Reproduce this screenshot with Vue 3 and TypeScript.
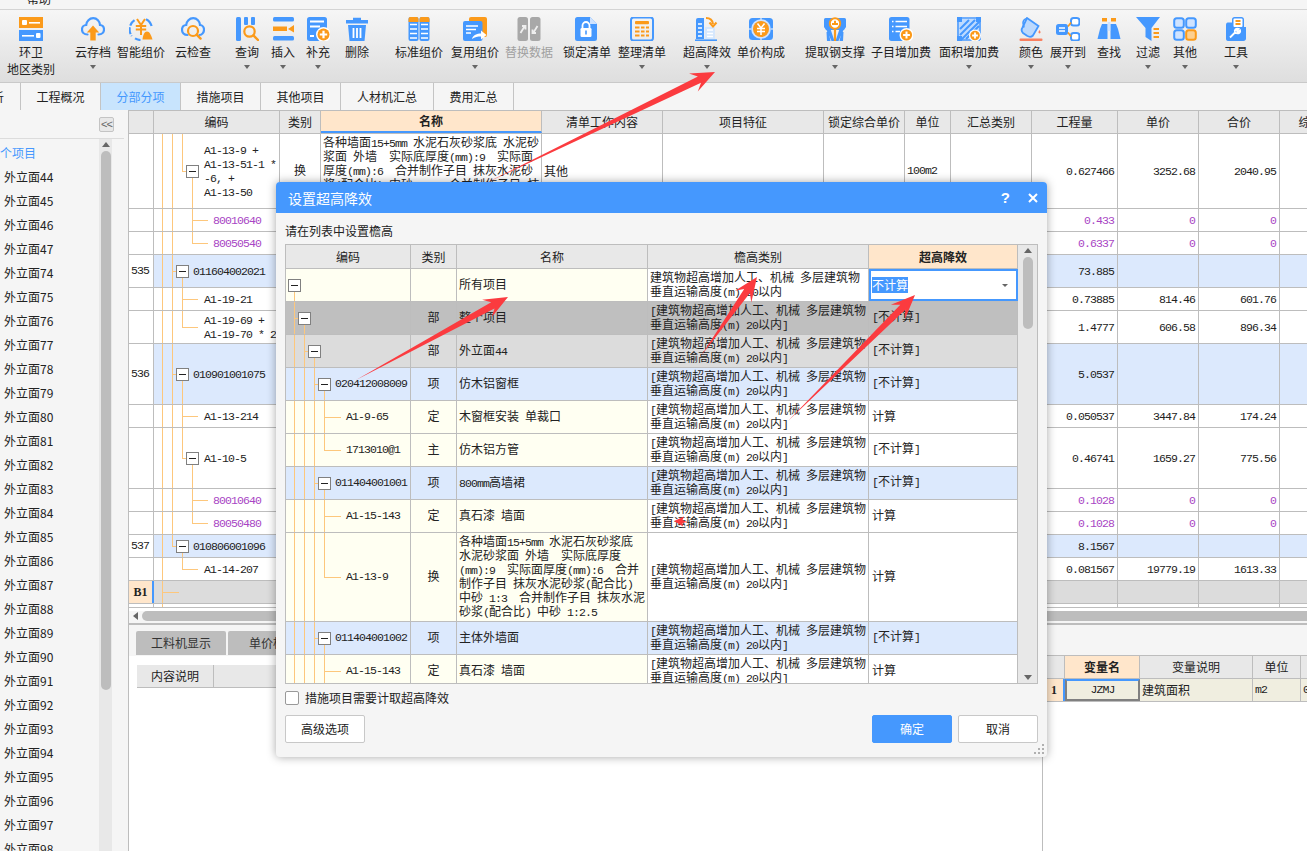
<script setup lang="ts">
type Seg = { full?: number[]; up?: number[]; down?: number[]; h?: [number, number]; box?: number }

const BLUE = '#4598fe'
const OR = '#fb9a1a'

const icons: Record<string, string> = {
  huanwei: `<rect x="0" y="0" width="24" height="11" fill="${OR}"/><rect x="0" y="13" width="24" height="11" fill="${BLUE}"/><rect x="3" y="3" width="5" height="5" rx="1" fill="#fff"/><rect x="10" y="5" width="11" height="1.6" fill="#fff"/><rect x="3" y="18" width="12" height="1.6" fill="#fff"/><rect x="17" y="16" width="4.5" height="5" rx="1" fill="#fff"/>`,
  cloudUp: `<path d="M6.5 17.5C3 17.5 1 15.2 1 12.5 1 9.8 3 8 5.2 8 5.5 4.2 8.4 1.2 12.2 1.2 16 1.2 18.8 4.2 19 8 21.2 8.2 23 10 23 12.5 23 15.2 21 17.5 17.5 17.5" fill="none" stroke="${BLUE}" stroke-width="2.2" stroke-linecap="round"/><path d="M12 8.5 18.2 15.5H14.7V23.5H9.3V15.5H5.8Z" fill="${OR}"/>`,
  smart: `<path d="M5.5 3.2A11 11 0 0 0 2.8 19" fill="none" stroke="${BLUE}" stroke-width="2.2" stroke-dasharray="7 1.6"/><path d="M17 2.2A11 11 0 0 1 22.6 9" fill="none" stroke="${BLUE}" stroke-width="2.2"/><path d="M6 21.4A11 11 0 0 0 11.5 23" fill="none" stroke="${BLUE}" stroke-width="2.2"/><path d="M8 2 12 8 16 2M6.8 9H17.2M6.8 12.6H17.2M12 8V18" fill="none" stroke="${OR}" stroke-width="2"/><path d="M13.5 22.5C14 18 15.5 14.5 18 14.5 20.5 14.5 22 18 23.5 22.5Z" fill="${OR}"/>`,
  cloudFind: `<path d="M6.5 18C3 18 1 15.5 1 12.8 1 10 3 8.2 5.2 8 5.5 4.2 8.4 1.2 12.2 1.2 16 1.2 18.8 4.2 19 8 21.2 8.2 23 10.2 23 12.8 23 15.5 21 18 18.5 18" fill="none" stroke="${BLUE}" stroke-width="2.2" stroke-linecap="round"/><circle cx="12" cy="14" r="5" fill="none" stroke="${OR}" stroke-width="2.2"/><path d="M15.6 17.6 19.6 21.6" stroke="${OR}" stroke-width="2.4" stroke-linecap="round"/>`,
  query: `<rect x="1" y="0" width="5" height="24" rx="1.5" fill="${BLUE}"/><rect x="9" y="0" width="4" height="8" rx="1" fill="${BLUE}"/><rect x="16" y="0" width="4" height="8" rx="1" fill="${BLUE}"/><circle cx="14.5" cy="14.5" r="5.2" fill="none" stroke="${OR}" stroke-width="2.2"/><path d="M18.4 18.4 23 23" stroke="${OR}" stroke-width="2.4" stroke-linecap="round"/>`,
  insert: `<rect x="2" y="0" width="21" height="4.5" rx="1.5" fill="${BLUE}"/><rect x="2" y="9.5" width="14" height="4.5" fill="${OR}"/><path d="M23 8 17 12 23 15.5Z" fill="${OR}"/><rect x="2" y="19" width="21" height="4.5" rx="1.5" fill="${BLUE}"/>`,
  plusDoc: `<rect x="1" y="0" width="20" height="24" rx="2.5" fill="${BLUE}"/><path d="M4 4.5H18M4 9.5H14M4 19H8" stroke="#fff" stroke-width="1.8"/><circle cx="17.5" cy="17.5" r="7.5" fill="#fff"/><circle cx="17.5" cy="17.5" r="6" fill="${OR}"/><path d="M17.5 13.8V21.2M13.8 17.5H21.2" stroke="#fff" stroke-width="2.2"/>`,
  trash: `<path d="M8 3V0.8H16V3H23V6.5H1V3Z" fill="${BLUE}"/><path d="M3 8H21L19.5 24H4.5Z" fill="${BLUE}"/><path d="M8.5 11V21M12 11V21M15.5 11V21" stroke="#fff" stroke-width="1.8"/>`,
  standard: `<rect x="1.5" y="0" width="10" height="24" rx="2" fill="${BLUE}"/><rect x="12.5" y="0" width="10" height="24" rx="2" fill="${BLUE}"/><path d="M1.5 2A2 2 0 0 1 3.5 0H9.5A2 2 0 0 1 11.5 2V5H1.5ZM12.5 2A2 2 0 0 1 14.5 0H20.5A2 2 0 0 1 22.5 2V5H12.5Z" fill="${OR}"/><path d="M3 7.5H10M3 12H10M3 16.5H10M3 21H10M14 7.5H21M14 12H21M14 16.5H21M14 21H21" stroke="#fff" stroke-width="1.7"/>`,
  reuse: `<rect x="6" y="0" width="18" height="20" rx="2" fill="${OR}"/><rect x="0" y="4" width="19.5" height="20" rx="2" fill="${BLUE}"/><path d="M3 9H15M3 12.5H13M3 16H8" stroke="#fff" stroke-width="1.6"/><path d="M9 22C10 18 14 16.5 18 16.5V13.5L23.5 18 18 22.5V19.5C14.5 19.5 12 20 9 22Z" fill="#fff"/>`,
  replace: `<rect x="0.5" y="0" width="10.5" height="24" rx="2.5" fill="#a8a8a8"/><rect x="13" y="0" width="10.5" height="24" rx="2.5" fill="#a8a8a8"/><path d="M3.5 16 7.5 9.5M5 9H8.5V12.5" fill="none" stroke="#eee" stroke-width="1.8"/><path d="M20.5 9 16.5 15.5M19 16H15.5V12.5" fill="none" stroke="#eee" stroke-width="1.8"/>`,
  lock: `<path d="M0 2.5A2.5 2.5 0 0 1 2.5 0H15L22 7V21.5A2.5 2.5 0 0 1 19.5 24H2.5A2.5 2.5 0 0 1 0 21.5Z" fill="${BLUE}"/><path d="M15 0 22 7H15Z" fill="#cfe3ff"/><rect x="5.5" y="11" width="11" height="9" rx="1.2" fill="#fff"/><path d="M7.5 11V8.5A3.5 3.5 0 0 1 14.5 8.5V11" fill="none" stroke="#fff" stroke-width="1.8"/><rect x="10.2" y="13.5" width="1.6" height="4" fill="${BLUE}"/>`,
  organize: `<rect x="1" y="0.5" width="22" height="23" rx="2.5" fill="none" stroke="${BLUE}" stroke-width="2"/><rect x="5" y="4" width="14" height="3.2" rx="1" fill="${OR}"/><path d="M5 10.5H9.5M11 10.5H14.5M16 10.5H19M5 14.5H9.5M11 14.5H14.5M16 14.5H19M5 18.5H9.5M11 18.5H14.5M16 18.5H19" stroke="${OR}" stroke-width="2"/>`,
  high: `<path d="M1 22V3A2 2 0 0 1 3 1H9V22Z" fill="${BLUE}"/><path d="M3 7H7M3 11H7M3 15H7M3 19H7" stroke="#fff" stroke-width="1.6"/><rect x="10" y="10" width="10" height="12" fill="#d5e7fd"/><path d="M12 13H18M12 16.5H18M12 19.5H18" stroke="#fff" stroke-width="1.4"/><rect x="0" y="22.4" width="22" height="1.6" fill="${BLUE}"/><path d="M11 1C15 1 17.5 3 18 7M14.5 5.5 18 9.5 21.5 5.5" fill="none" stroke="${OR}" stroke-width="2"/>`,
  yuan: `<rect x="0" y="1" width="24" height="22" rx="3.5" fill="${BLUE}"/><path d="M12 1V3M12 21V23M0 12H2M22 12H24" stroke="#fff" stroke-width="1"/><circle cx="12" cy="12" r="9.8" fill="#cfe3ff"/><circle cx="12" cy="12" r="8" fill="${OR}"/><path d="M8.5 6.5 12 11 15.5 6.5M8 11.5H16M8 14.5H16M12 11V18" fill="none" stroke="#fff" stroke-width="1.5"/>`,
  steel: `<path d="M1 2.5A1.5 1.5 0 0 1 2.5 1H21.5A1.5 1.5 0 0 1 23 2.5V10L21 13H3L1 10Z" fill="${BLUE}"/><path d="M3 12H7.5L11.5 24H8.5ZM21 12H16.5L12.5 24H15.5Z" fill="${BLUE}"/><path d="M4 24H7.5L5.5 15H3.5ZM20 24H16.5L18.5 15H20.5Z" fill="${BLUE}"/><path d="M12 11V24" stroke="${OR}" stroke-width="2.2"/><circle cx="12" cy="6.5" r="5.2" fill="#fff" stroke="${OR}" stroke-width="2"/><path d="M9 8H15V6H13V3.8H11V6H9Z" fill="${OR}"/>`,
  subAdd: `<rect x="0" y="0" width="20.5" height="24" rx="2.5" fill="${BLUE}"/><path d="M3 4.5H4.5M6.5 4.5H18M3 9.5H4.5M6.5 9.5H18M3 14.5H4.5M6.5 14.5H11" stroke="#fff" stroke-width="1.7"/><circle cx="17.5" cy="18" r="7" fill="#fff"/><circle cx="17.5" cy="18" r="5.6" fill="${OR}"/><path d="M17.5 14.6V21.4M14.1 18H20.9" stroke="#fff" stroke-width="2"/>`,
  area: `<rect x="2" y="2" width="20" height="20" fill="#fff"/><path d="M2 2H22V22H2Z" fill="${BLUE}" opacity=".35"/><path d="M3 12 12 3M3 18 18 3M3 24 24 3M9 22 22 9M15 22 22 15" stroke="${BLUE}" stroke-width="2"/><path d="M1 1H23M1 23H23M1 1V23M23 1V23" stroke="${BLUE}" stroke-width="1.6"/><rect x="0" y="0" width="5" height="5" fill="${BLUE}"/><rect x="19" y="0" width="5" height="5" fill="${BLUE}"/><rect x="0" y="19" width="5" height="5" fill="${BLUE}"/><circle cx="18" cy="18.5" r="6" fill="#fff"/><circle cx="18" cy="18.5" r="4.8" fill="${OR}"/><path d="M18 15.6V21.4M15.1 18.5H20.9" stroke="#fff" stroke-width="1.8"/>`,
  color: `<path d="M8 1 19.5 9 14 18.5C12.5 20 10 20 8 18.8L4 16C2.5 14.5 2.5 12 3.5 10.5Z" fill="#bcd9fd" stroke="${BLUE}" stroke-width="1.8"/><path d="M5 10.5 4 6C4 3.5 6 1.5 8 1.5" fill="none" stroke="${BLUE}" stroke-width="1.6"/><path d="M20.5 13C21.8 15 22 16 20.5 16.5 19 16 19.2 15 20.5 13Z" fill="#f98060"/><rect x="0.5" y="21.5" width="23" height="2.5" rx="1" fill="#f98060"/>`,
  expand: `<rect x="0" y="7" width="12" height="11" rx="2.5" fill="${BLUE}"/><path d="M3 11H9M3 14H9" stroke="#fff" stroke-width="1.4"/><rect x="15" y="1" width="8.4" height="7.5" rx="2.5" fill="#fff" stroke="${BLUE}" stroke-width="2"/><rect x="15" y="16" width="8.4" height="7.5" rx="2.5" fill="#fff" stroke="${BLUE}" stroke-width="2"/><path d="M12 9.5 15 5.5M12 15.5 15 19.5" stroke="${OR}" stroke-width="1.6"/>`,
  binoc: `<path d="M5 7H10.5V22H0.5L3 12Z" fill="${BLUE}"/><path d="M13.5 7H19L21 12 23.5 22H13.5Z" fill="${BLUE}"/><path d="M5 1H10V4.5H5ZM14 1H19V4.5H14Z" fill="${OR}"/><path d="M10.8 5H13.2V14H10.8Z" fill="#cfe3ff"/>`,
  filter: `<path d="M0 0H24L15.5 11V24L9.5 20V11Z" fill="${BLUE}"/><path d="M17.5 12H23M17.5 16H23M17.5 20H23" stroke="${OR}" stroke-width="2"/>`,
  others: `<rect x="1.2" y="1.2" width="9.6" height="9.6" rx="2.5" fill="#cfe3ff" stroke="${BLUE}" stroke-width="2"/><rect x="13.2" y="1.2" width="9.6" height="9.6" rx="2.5" fill="#cfe3ff" stroke="${BLUE}" stroke-width="2"/><rect x="1.2" y="13.2" width="9.6" height="9.6" rx="2.5" fill="#cfe3ff" stroke="${BLUE}" stroke-width="2"/><rect x="13.2" y="13.2" width="9.6" height="9.6" rx="2.5" fill="#fdd091" stroke="${OR}" stroke-width="2"/>`,
  tool: `<path d="M2 8C2 6 3 5.5 4.5 5.5H8V2.5C8 1 9 0 10.5 0H17.5C19 0 20 1 20 2.5V10H22V21.5C22 23 21 24 19.5 24H4C2.5 24 2 23 2 21.5Z" fill="${BLUE}"/><rect x="9.5" y="1.5" width="9" height="8.5" rx="1" fill="#fff"/><path d="M11.5 4H16.5M11.5 7H16.5" stroke="${OR}" stroke-width="1.8"/><path d="M6 20.5 11 15.5M11 15.5C10 13 12 11 14.5 11.8L12.8 13.8 14 15 16 13.3C16.8 15.8 14 17.5 11 15.5" fill="none" stroke="#fff" stroke-width="1.8"/>`,
}

type RibbonItem = { icon: string; label: string; c: number; drop?: boolean; sub?: string; off?: boolean }
const ribbonRaw: RibbonItem[] = [
  { icon: 'huanwei', label: '环卫', c: 31, sub: '地区类别' },
  { icon: 'cloudUp', label: '云存档', c: 93, drop: true },
  { icon: 'smart', label: '智能组价', c: 141 },
  { icon: 'cloudFind', label: '云检查', c: 193 },
  { icon: 'query', label: '查询', c: 247, drop: true },
  { icon: 'insert', label: '插入', c: 283, drop: true },
  { icon: 'plusDoc', label: '补充', c: 318, drop: true },
  { icon: 'trash', label: '删除', c: 357 },
  { icon: 'standard', label: '标准组价', c: 419 },
  { icon: 'reuse', label: '复用组价', c: 475, drop: true },
  { icon: 'replace', label: '替换数据', c: 529, off: true },
  { icon: 'lock', label: '锁定清单', c: 587 },
  { icon: 'organize', label: '整理清单', c: 642, drop: true },
  { icon: 'high', label: '超高降效', c: 707, drop: true },
  { icon: 'yuan', label: '单价构成', c: 761 },
  { icon: 'steel', label: '提取钢支撑', c: 835, drop: true },
  { icon: 'subAdd', label: '子目增加费', c: 901 },
  { icon: 'area', label: '面积增加费', c: 969, drop: true },
  { icon: 'color', label: '颜色', c: 1031, drop: true },
  { icon: 'expand', label: '展开到', c: 1068, drop: true },
  { icon: 'binoc', label: '查找', c: 1109 },
  { icon: 'filter', label: '过滤', c: 1148, drop: true },
  { icon: 'others', label: '其他', c: 1185, drop: true },
  { icon: 'tool', label: '工具', c: 1236, drop: true },
]
let rightEdge = 0
const ribbon = ribbonRaw.map((r) => {
  const w = Math.max(r.label.length, r.sub ? r.sub.length : 0) * 12
  const left = r.c - w / 2
  const gap = left - rightEdge
  rightEdge = left + w
  return { ...r, w, gap }
})

const tabs = [
  { t: '分析', w: 21, first: true },
  { t: '工程概况', w: 80 },
  { t: '分部分项', w: 80, on: true },
  { t: '措施项目', w: 80 },
  { t: '其他项目', w: 80 },
  { t: '人材机汇总', w: 93 },
  { t: '费用汇总', w: 80 },
]

const side = ['44', '45', '46', '47', ...Array.from({ length: 25 }, (_, i) => String(74 + i))]

const mainHead = [
  { t: '', w: 25 }, { t: '编码', w: 126 }, { t: '类别', w: 41 }, { t: '名称', w: 221, on: true },
  { t: '清单工作内容', w: 121 }, { t: '项目特征', w: 161 }, { t: '锁定综合单价', w: 81 }, { t: '单位', w: 46 },
  { t: '汇总类别', w: 81 }, { t: '工程量', w: 86 }, { t: '单价', w: 81 }, { t: '合价', w: 81 }, { t: '综合单价', w: 86 },
]

type MainRow = {
  h: number; no?: string; code?: string; x?: number; cls?: string; purple?: boolean
  kind?: string; name?: string; work?: string; unit?: string
  qty?: string; price?: string; total?: string; tree: Seg; b1?: boolean
}
const mainRows: MainRow[] = [
  { h: 75, code: 'A1-13-9 +\nA1-13-51-1 *\n-6, +\nA1-13-50', x: 50, kind: '换', name: '各种墙面15+5mm 水泥石灰砂浆底 水泥砂\n浆面 外墙  实际底厚度(mm):9  实际面\n厚度(mm):6  合并制作子目 抹灰水泥砂\n浆(配合比) 中砂 1:3  合并制作子目 抹', work: '其他', unit: '100m2', qty: '0.627466', price: '3252.68', total: '2040.95', tree: { full: [8, 18], up: [28], h: [28, 32], box: 38, down: [38] } },
  { h: 23, code: '80010640', x: 59, purple: true, qty: '0.433', price: '0', total: '0', tree: { full: [8, 18, 38], h: [38, 54] } },
  { h: 23, code: '80050540', x: 59, purple: true, qty: '0.6337', price: '0', total: '0', tree: { full: [8, 18], up: [38], h: [38, 54] } },
  { h: 33, no: '535', code: '011604002021', x: 39, cls: 'blue', qty: '73.885', tree: { full: [8, 18], h: [18, 22], box: 28, down: [28] } },
  { h: 23, code: 'A1-19-21', x: 50, qty: '0.73885', price: '814.46', total: '601.76', tree: { full: [8, 18, 28], h: [28, 44] } },
  { h: 33, code: 'A1-19-69 +\nA1-19-70 * 2', x: 50, qty: '1.4777', price: '606.58', total: '896.34', tree: { full: [8, 18], up: [28], h: [28, 44] } },
  { h: 61, no: '536', code: '010901001075', x: 39, cls: 'blue', qty: '5.0537', tree: { full: [8, 18], h: [18, 22], box: 28, down: [28] } },
  { h: 23, code: 'A1-13-214', x: 50, qty: '0.050537', price: '3447.84', total: '174.24', tree: { full: [8, 18, 28], h: [28, 44] } },
  { h: 61, code: 'A1-10-5', x: 50, qty: '0.46741', price: '1659.27', total: '775.56', tree: { full: [8, 18], up: [28], h: [28, 32], box: 38, down: [38] } },
  { h: 23, code: '80010640', x: 59, purple: true, qty: '0.1028', price: '0', total: '0', tree: { full: [8, 18, 38], h: [38, 54] } },
  { h: 23, code: '80050480', x: 59, purple: true, qty: '0.1028', price: '0', total: '0', tree: { full: [8, 18], up: [38], h: [38, 54] } },
  { h: 23, no: '537', code: '010806001096', x: 39, cls: 'blue', qty: '8.1567', tree: { full: [8], up: [18], h: [18, 22], box: 28, down: [28] } },
  { h: 23, code: 'A1-14-207', x: 50, qty: '0.081567', price: '19779.19', total: '1613.33', tree: { full: [8], up: [28], h: [28, 44] } },
  { h: 23, no: 'B1', b1: true, cls: 'gray', tree: { full: [8], h: [8, 25] } },
  { h: 4, tree: { full: [8] } },
]

const dialogHead = [
  { t: '编码', w: 125 }, { t: '类别', w: 46 }, { t: '名称', w: 191 }, { t: '檐高类别', w: 221 }, { t: '超高降效', w: 149, on: true },
]
const L0 = '建筑物超高增加人工、机械 多层建筑物\n垂直运输高度(m) 20以内'
const L1 = '[建筑物超高增加人工、机械 多层建筑物\n垂直运输高度(m) 20以内]'
const longName = '各种墙面15+5mm 水泥石灰砂浆底\n水泥砂浆面 外墙  实际底厚度\n(mm):9  实际面厚度(mm):6  合并\n制作子目 抹灰水泥砂浆(配合比)\n中砂 1:3  合并制作子目 抹灰水泥\n砂浆(配合比) 中砂 1:2.5'
type DlgRow = { h: number; code?: string; x?: number; kind: string; name: string; type: string; val: string; cls: string; tree: Seg; edit?: boolean }
const dlgRows: DlgRow[] = [
  { h: 33, kind: '', name: '所有项目', type: L0, val: '不计算', cls: 'y', edit: true, tree: { box: 8, down: [8] } },
  { h: 33, kind: '部', name: '整个项目', type: L1, val: '[不计算]', cls: 'g1', tree: { full: [8], h: [8, 12], box: 18, down: [18] } },
  { h: 33, kind: '部', name: '外立面44', type: L1, val: '[不计算]', cls: 'g2', tree: { full: [8, 18], h: [18, 22], box: 28, down: [28] } },
  { h: 33, code: '020412008009', x: 49, kind: '项', name: '仿木铝窗框', type: L1, val: '[不计算]', cls: 'blue', tree: { full: [8, 18, 28], h: [28, 32], box: 38, down: [38] } },
  { h: 33, code: 'A1-9-65', x: 60, kind: '定', name: '木窗框安装 单裁口', type: L1, val: '计算', cls: 'y', tree: { full: [8, 18, 28, 38], h: [38, 55] } },
  { h: 33, code: '1713010@1', x: 60, kind: '主', name: '仿木铝方管', type: L1, val: '[不计算]', cls: 'y', tree: { full: [8, 18, 28], up: [38], h: [38, 55] } },
  { h: 33, code: '011404001001', x: 49, kind: '项', name: '800mm高墙裙', type: L1, val: '[不计算]', cls: 'blue', tree: { full: [8, 18, 28], h: [28, 32], box: 38, down: [38] } },
  { h: 33, code: 'A1-15-143', x: 60, kind: '定', name: '真石漆 墙面', type: L1, val: '计算', cls: 'y', tree: { full: [8, 18, 28, 38], h: [38, 55] } },
  { h: 89, code: 'A1-13-9', x: 60, kind: '换', name: longName, type: L1, val: '计算', cls: 'y', tree: { full: [8, 18, 28], up: [38], h: [38, 55] } },
  { h: 33, code: '011404001002', x: 49, kind: '项', name: '主体外墙面', type: L1, val: '[不计算]', cls: 'blue', tree: { full: [8, 18, 28], h: [28, 32], box: 38, down: [38] } },
  { h: 33, code: 'A1-15-143', x: 60, kind: '定', name: '真石漆 墙面', type: L1, val: '计算', cls: 'y', tree: { full: [8, 18, 28, 38], h: [38, 55] } },
]

function runs(text: string) {
  return (text.match(/[\x00-\x7f]+|[^\x00-\x7f]+/g) || []).map((t) => ({ t, m: /^[\x00-\x7f]/.test(t) }))
}

// tree guide segments for a row of given height; x is relative to the code cell
function segs(tree: Seg, rowH: number) {
  const inner = rowH - 1
  const mid = Math.round(inner / 2)
  const out: Record<string, string>[] = []
  for (const x of tree.full || []) out.push({ left: x + 'px', top: '0', width: '1px', height: inner + 'px' })
  for (const x of tree.up || []) out.push({ left: x + 'px', top: '0', width: '1px', height: mid + 'px' })
  for (const x of tree.down || []) out.push({ left: x + 'px', top: mid + 'px', width: '1px', height: inner - mid + 'px' })
  if (tree.h) out.push({ left: tree.h[0] + 'px', top: mid + 'px', width: tree.h[1] - tree.h[0] + 'px', height: '1px' })
  return out
}
function boxPos(tree: Seg, rowH: number) {
  const mid = Math.round((rowH - 1) / 2)
  return { left: (tree.box as number) - 6 + 'px', top: mid - 6 + 'px' }
}

function arrow(x1: number, y1: number, x2: number, y2: number, L = 24, W = 10, w = 3.5) {
  const len = Math.hypot(x2 - x1, y2 - y1)
  const dx = (x2 - x1) / len
  const dy = (y2 - y1) / len
  const nx = -dy
  const ny = dx
  const p = (d: number, s: number) => `${(x2 - dx * d + nx * s).toFixed(1)},${(y2 - dy * d + ny * s).toFixed(1)}`
  return [`${x1},${y1}`, p(L * 0.72, w), p(L, W), `${x2},${y2}`, p(L, -W), p(L * 0.72, -w)].join(' ')
}
const arrows = [
  arrow(484, 184, 715, 72),
  arrow(356, 380, 508, 297),
  arrow(701, 356, 757, 277),
  arrow(788, 421, 915, 295),
]
</script>

<template>
  <div class="page">
    <div class="menu"><span class="menu-text">帮助</span></div>

    <div class="ribbon">
      <div
        v-for="r in ribbon"
        :key="r.label"
        class="rb"
        :class="{ off: r.off }"
        :style="{ width: r.w + 'px', marginLeft: r.gap + 'px' }"
      >
        <svg class="rb-ic" viewBox="0 0 24 24" v-html="icons[r.icon]"></svg>
        <div class="rb-l">{{ r.label }}</div>
        <div v-if="r.sub" class="rb-l rb-sub">{{ r.sub }}</div>
        <i v-if="r.drop" class="rb-drop"></i>
      </div>
    </div>

    <div class="tabs">
      <div
        v-for="t in tabs"
        :key="t.t"
        class="tab"
        :class="{ on: t.on, first: t.first }"
        :style="{ width: t.w + 'px' }"
      >{{ t.t }}</div>
    </div>

    <div class="work">
      <aside class="side">
        <div class="side-top"><button class="collapse">&lt;&lt;</button></div>
        <div class="side-body">
          <div class="side-list">
            <div class="side-item root">整个项目</div>
            <div v-for="s in side" :key="s" class="side-item">外立面{{ s }}</div>
          </div>
          <div class="vbar side-bar">
            <i class="up"></i>
            <b class="thumb"></b>
          </div>
        </div>
      </aside>

      <main class="pane">
        <div class="grid">
          <div class="mrow mhead">
            <div v-for="h in mainHead" :key="h.t" class="hc" :class="{ on: h.on }" :style="{ width: h.w + 'px' }">{{ h.t }}</div>
          </div>
          <div v-for="(r, i) in mainRows" :key="i" class="mrow" :class="r.cls" :style="{ height: r.h + 'px' }">
            <div class="c no" :class="{ b1: r.b1, m: !r.b1 }" :style="{ width: mainHead[0].w + 'px' }">{{ r.no }}</div>
            <div class="c code" :class="{ purple: r.purple }" :style="{ width: mainHead[1].w + 'px', paddingLeft: (r.x || 0) + 'px' }">
              <i v-for="(s, k) in segs(r.tree, r.h)" :key="k" class="ln" :style="s"></i>
              <i v-if="r.tree.box !== undefined" class="box" :style="boxPos(r.tree, r.h)"></i>
              <span class="m codetext">{{ r.code }}</span>
            </div>
            <div class="c mid" :style="{ width: mainHead[2].w + 'px' }">{{ r.kind }}</div>
            <div class="c name" :style="{ width: mainHead[3].w + 'px' }"><span class="pre"><span v-for="(p, k) in runs(r.name || '')" :key="k" :class="{ m: p.m }">{{ p.t }}</span></span></div>
            <div class="c" :style="{ width: mainHead[4].w + 'px' }">{{ r.work }}</div>
            <div class="c" :style="{ width: mainHead[5].w + 'px' }"></div>
            <div class="c" :style="{ width: mainHead[6].w + 'px' }"></div>
            <div class="c m" :style="{ width: mainHead[7].w + 'px' }">{{ r.unit }}</div>
            <div class="c" :style="{ width: mainHead[8].w + 'px' }"></div>
            <div class="c num m" :class="{ purple: r.purple }" :style="{ width: mainHead[9].w + 'px' }">{{ r.qty }}</div>
            <div class="c num m" :class="{ purple: r.purple }" :style="{ width: mainHead[10].w + 'px' }">{{ r.price }}</div>
            <div class="c num m" :class="{ purple: r.purple }" :style="{ width: mainHead[11].w + 'px' }">{{ r.total }}</div>
            <div class="c" :style="{ width: mainHead[12].w + 'px' }"></div>
          </div>
        </div>
        <div class="hbar">
          <i class="left"></i>
          <b class="hthumb"></b>
        </div>
        <div class="lower">
          <div class="lower-left">
            <div class="ltabs">
              <div class="ltab">工料机显示</div>
              <div class="ltab">单价构成</div>
            </div>
            <div class="ltable">
              <div class="lth">内容说明</div>
              <div class="lth-fill"></div>
            </div>
          </div>
          <div class="lower-right">
            <div class="rstrip"></div>
            <div class="rrow rhead">
              <div class="rc w1"></div>
              <div class="rc w2 on">变量名</div>
              <div class="rc w3">变量说明</div>
              <div class="rc w4">单位</div>
              <div class="rc w5"></div>
            </div>
            <div class="rrow rbody">
              <div class="rc w1 idx">1</div>
              <div class="rc w2 cur m">JZMJ</div>
              <div class="rc w3 lft">建筑面积</div>
              <div class="rc w4 lft m">m2</div>
              <div class="rc w5 lft m">0</div>
            </div>
          </div>
        </div>
      </main>
    </div>

    <section class="dlg">
      <header class="dlg-title">
        <span>设置超高降效</span>
        <span class="dlg-help">?</span>
        <svg class="dlg-x" viewBox="0 0 10 10"><path d="M1 1 9 9M9 1 1 9" stroke="#fff" stroke-width="2" /></svg>
      </header>
      <div class="dlg-body">
        <div class="dlg-tip">请在列表中设置檐高</div>
        <div class="dt">
          <div class="dt-main">
            <div class="drow dhead">
              <div v-for="h in dialogHead" :key="h.t" class="hc" :class="{ on2: h.on }" :style="{ width: h.w + 'px' }">{{ h.t }}</div>
            </div>
            <div class="dt-rows">
              <div v-for="(r, i) in dlgRows" :key="i" class="drow" :class="r.cls" :style="{ height: r.h + 'px' }">
                <div class="c code" :style="{ width: dialogHead[0].w + 'px', paddingLeft: (r.x || 0) + 'px' }">
                  <i v-for="(s, k) in segs(r.tree, r.h)" :key="k" class="ln" :style="s"></i>
                  <i v-if="r.tree.box !== undefined" class="box" :style="boxPos(r.tree, r.h)"></i>
                  <span class="m">{{ r.code }}</span>
                </div>
                <div class="c mid" :style="{ width: dialogHead[1].w + 'px' }">{{ r.kind }}</div>
                <div class="c" :style="{ width: dialogHead[2].w + 'px' }"><span class="pre"><span v-for="(p, k) in runs(r.name)" :key="k" :class="{ m: p.m }">{{ p.t }}</span></span></div>
                <div class="c alt" :style="{ width: dialogHead[3].w + 'px' }"><span class="pre"><span v-for="(p, k) in runs(r.type)" :key="k" :class="{ m: p.m }">{{ p.t }}</span></span></div>
                <div class="c alt val" :class="{ edit: r.edit }" :style="{ width: dialogHead[4].w + 'px' }">
                  <span :class="{ sel: r.edit }"><span v-for="(p, k) in runs(r.val)" :key="k" :class="{ m: p.m }">{{ p.t }}</span></span>
                  <i v-if="r.edit" class="caret"></i>
                </div>
              </div>
            </div>
          </div>
          <div class="vbar dt-bar">
            <i class="up"></i>
            <b class="thumb"></b>
            <i class="down"></i>
          </div>
        </div>
        <label class="chk"><i class="chk-box"></i>措施项目需要计取超高降效</label>
        <div class="btns">
          <button class="btn">高级选项</button>
          <span class="spring"></span>
          <button class="btn primary">确定</button>
          <button class="btn">取消</button>
        </div>
      </div>
      <svg class="grip" viewBox="0 0 12 12"><path d="M9 1h2v2H9zM5 5h2v2H5zM9 5h2v2H9zM1 9h2v2H1zM5 9h2v2H5zM9 9h2v2H9z" fill="#b0b0b0" /></svg>
    </section>

    <svg class="marks" viewBox="0 0 1307 851">
      <polygon v-for="(a, i) in arrows" :key="i" :points="a" fill="#fb3b3f" />
      <polygon points="674,521 684,516.5 682.5,520 687,522 682.5,523 683,526.5" fill="#fb3b3f" />
    </svg>
  </div>
</template>

<style scoped>
.page {
  position: relative;
  width: 1307px;
  height: 851px;
  overflow: hidden;
  display: flex;
  flex-direction: column;
  background: #f5f5f5;
  font: 12px/14px "Noto Sans CJK SC", "Liberation Sans", sans-serif;
  color: #222;
}
.menu {
  height: 10px;
  flex: none;
  background: #f5f5f5;
  border-bottom: 1px solid #d4d4d4;
  box-sizing: border-box;
  overflow: hidden;
  padding-left: 27px;
}
.menu-text { display: block; margin-top: -8px; line-height: 14px; }

.ribbon {
  height: 73px;
  flex: none;
  box-sizing: border-box;
  display: flex;
  background: linear-gradient(#f6f6f6, #dedede);
  border-bottom: 1px solid #c9c9c9;
}
.rb {
  position: relative;
  flex: none;
  display: flex;
  flex-direction: column;
  align-items: center;
  padding-top: 7px;
  white-space: nowrap;
}
.rb-ic { width: 24px; height: 24px; flex: none; }
.rb-l { margin-top: 2px; height: 17px; line-height: 17px; }
.rb-sub { margin-top: 0; }
.rb-drop {
  position: absolute;
  left: 50%;
  top: 55px;
  margin-left: -3px;
  border-left: 3px solid transparent;
  border-right: 3px solid transparent;
  border-top: 4px solid #666;
}
.off { color: #a0a0a0; }

.tabs {
  height: 27px;
  flex: none;
  display: flex;
  background: #f5f5f5;
  box-sizing: border-box;
}
.tab {
  flex: none;
  box-sizing: border-box;
  border-right: 1px solid #c4c4c4;
  display: flex;
  align-items: center;
  justify-content: center;
  white-space: nowrap;
  overflow: hidden;
}
.tab.first { justify-content: flex-end; padding-right: 16px; }
.tab.on { background: #c8e4fd; color: #4598fe; }

.work { flex: 1; min-height: 0; display: flex; }

.side { width: 128px; flex: none; display: flex; flex-direction: column; }
.side-top {
  height: 29px;
  flex: none;
  width: 124px;
  box-sizing: border-box;
  border-bottom: 1px solid #dcdcdc;
  display: flex;
  justify-content: flex-end;
  align-items: flex-start;
  padding: 7px 10px 0 0;
}
.collapse {
  width: 15px;
  height: 15px;
  padding: 0;
  box-sizing: border-box;
  background: #e8e8e8;
  border: 1px solid #c4c4c4;
  border-radius: 2px;
  font: 11px/11px "Liberation Sans", sans-serif;
  letter-spacing: -1px;
  color: #666;
}
.side-body { flex: 1; min-height: 0; width: 112px; display: flex; }
.side-list { width: 99px; flex: none; overflow: hidden; padding-top: 2px; }
.side-item { height: 24px; line-height: 24px; padding-left: 4px; white-space: nowrap; }
.side-item.root { margin-left: -16px; color: #4598fe; }

.vbar {
  position: relative;
  flex: none;
  background: #e8e8e8;
  display: flex;
  flex-direction: column;
  align-items: center;
}
.vbar .up {
  flex: none;
  margin-top: 3px;
  border-left: 4px solid transparent;
  border-right: 4px solid transparent;
  border-bottom: 5px solid #666;
}
.vbar .down {
  position: absolute;
  bottom: 3px;
  left: 50%;
  margin-left: -4px;
  border-left: 4px solid transparent;
  border-right: 4px solid transparent;
  border-top: 5px solid #666;
}
.thumb { display: block; flex: none; background: #bdbdbd; border-radius: 5px; }
.side-bar { width: 13px; }
.side-bar .thumb { width: 10px; height: 539px; margin-top: 4px; }

.pane { flex: 1; min-width: 0; display: flex; flex-direction: column; border-left: 1px solid #bdbdbd; }
.grid { height: 501px; flex: none; overflow: hidden; background: #fff; }
.mrow { display: flex; width: 1300px; box-sizing: border-box; border-bottom: 1px solid #bdbdbd; }
.mhead { height: 24px; border-top: 1px solid #bdbdbd; background: #e8e8e8; }
.hc {
  flex: none;
  box-sizing: border-box;
  border-right: 1px solid #bdbdbd;
  display: flex;
  align-items: center;
  justify-content: center;
  white-space: nowrap;
  overflow: hidden;
}
.hc.on {
  background: #ffe6cb;
  font-weight: 700;
  border-bottom: 2px solid #4598fe;
}
.hc.on2 { background: #ffe6cb; font-weight: 700; }
.c {
  position: relative;
  flex: none;
  box-sizing: border-box;
  border-right: 1px solid #bdbdbd;
  display: flex;
  align-items: center;
  padding: 0 2px;
  overflow: hidden;
  white-space: nowrap;
}
.mid { justify-content: center; padding-bottom: 2px; }
.num { justify-content: flex-end; padding-right: 3px; padding-top: 1px; }
.codetext { white-space: pre; padding-top: 1px; }
.name { align-items: flex-start; padding-top: 1px; }
.no { padding-left: 2px; }
.no.b1 {
  background: #ffe6cb;
  font: 700 12px/14px "Liberation Serif", serif;
  justify-content: center;
  border-right: 2px solid #4598fe;
}
.purple { color: #a845c4; }
.pre { display: block; white-space: pre; line-height: 14px; }
.c > .pre { margin-bottom: 2px; }
.pre > span { line-height: 0; }
.m { font-family: "Liberation Mono", monospace; font-size: 11.5px; letter-spacing: -.9px; }
.mrow.blue .c:not(.no) { background: #dce9fd; }
.mrow.gray .c:not(.no) { background: #dcdcdc; }
.ln { position: absolute; background: #fdc77c; }
.box {
  position: absolute;
  width: 13px;
  height: 13px;
  box-sizing: border-box;
  background: #fff;
  border: 1px solid #808080;
}
.box::after {
  content: "";
  position: absolute;
  left: 2px;
  right: 2px;
  top: 5px;
  height: 1px;
  background: #222;
}

.hbar {
  height: 14px;
  flex: none;
  box-sizing: border-box;
  background: #f5f5f5;
  border-bottom: 2px solid #bdbdbd;
  position: relative;
}
.hbar .left {
  position: absolute;
  left: 4px;
  top: 1px;
  border-top: 4px solid transparent;
  border-bottom: 4px solid transparent;
  border-right: 5px solid #666;
}
.hbar .hthumb {
  display: block;
  height: 10px;
  margin: 0 0 0 13px;
  background: #bdbdbd;
  border-radius: 5px 0 0 5px;
}
.lower { flex: 1; min-height: 0; display: flex; background: #fff; }
.lower-left { width: 914px; flex: none; border-right: 1px solid #bdbdbd; box-sizing: border-box; }
.ltabs { height: 31px; box-sizing: border-box; background: #f5f5f5; display: flex; gap: 2px; padding: 6px 0 0 7px; }
.ltab {
  width: 90px;
  height: 24px;
  background: #bdbdbd;
  border-radius: 2px 2px 0 0;
  display: flex;
  align-items: center;
  justify-content: center;
  color: #333;
}
.ltable { display: flex; margin: 9px 0 0 8px; height: 23px; background: #e8e8e8; border-bottom: 1px solid #bdbdbd; box-sizing: border-box; }
.lth { width: 77px; box-sizing: border-box; border-right: 1px solid #bdbdbd; display: flex; align-items: center; justify-content: center; }
.lth-fill { flex: 1; }
.lower-right { flex: 1; min-width: 0; overflow: hidden; }
.rstrip { height: 31px; box-sizing: border-box; background: #f5f5f5; border-bottom: 1px solid #bdbdbd; }
.rrow { display: flex; width: 300px; height: 23px; box-sizing: border-box; border-bottom: 1px solid #bdbdbd; }
.rhead { background: #e8e8e8; }
.rbody { background: #f0eee0; }
.rc {
  flex: none;
  box-sizing: border-box;
  border-right: 1px solid #bdbdbd;
  display: flex;
  align-items: center;
  justify-content: center;
  white-space: nowrap;
}
.w1 { width: 22px; }
.w2 { width: 75px; }
.w3 { width: 113px; }
.w4 { width: 48px; }
.w5 { width: 42px; }
.rc.on { background: #ffe6cb; font-weight: 700; }
.rc.idx {
  background: #ffe6cb;
  font: 700 12px/14px "Liberation Serif", serif;
  border-right: 2px solid #4598fe;
  padding-left: 8px;
  justify-content: flex-start;
}
.rc.cur {
  border: 2px solid #808080;
  border-top-color: #4598fe;
  border-right-width: 2px;
}
.rc.lft { justify-content: flex-start; padding-left: 2px; }

.dlg {
  position: absolute;
  left: 276px;
  top: 182px;
  width: 771px;
  height: 575px;
  background: #f5f5f5;
  border-radius: 4px;
  box-shadow: 0 0 10px rgba(0, 0, 0, .35);
  display: flex;
  flex-direction: column;
}
.dlg-title {
  height: 31px;
  flex: none;
  background: #4598fe;
  border-radius: 4px 4px 0 0;
  color: #fff;
  font-size: 14px;
  padding-left: 12px;
  display: flex;
  align-items: center;
}
.dlg-help {
  margin-left: auto;
  font: 700 15px/16px "Liberation Sans", sans-serif;
  margin-right: 18px;
}
.dlg-x { width: 10px; height: 10px; margin-right: 9px; }
.dlg-body { flex: 1; min-height: 0; padding: 0 9px; display: flex; flex-direction: column; }
.dlg-tip { height: 31px; line-height: 35px; flex: none; box-sizing: border-box; }
.dt {
  flex: none;
  height: 440px;
  box-sizing: border-box;
  border: 1px solid #bdbdbd;
  display: flex;
  background: #fff;
  width: 753px;
}
.dt-main { width: 732px; flex: none; overflow: hidden; display: flex; flex-direction: column; }
.drow { display: flex; box-sizing: border-box; border-bottom: 1px solid #bdbdbd; }
.dhead { height: 24px; flex: none; background: #e8e8e8; }
.dt-rows { flex: 1; min-height: 0; overflow: hidden; }
.drow.y { background: #fffff2; }
.drow.y .alt { background: #fff; }
.drow.g1 { background: #bfbfbf; }
.drow.g2 { background: #dcdcdc; }
.drow.blue { background: #dce9fd; }
.val { padding-left: 3px; padding-bottom: 2px; }
.val.edit {
  outline: 2px solid #4598fe;
  outline-offset: -2px;
  padding-left: 3px;
  padding-bottom: 0;
}
.sel { background: #4598fe; color: #fff; height: 16px; line-height: 16px; }
.caret {
  position: absolute;
  right: 9px;
  top: 15px;
  border-left: 3px solid transparent;
  border-right: 3px solid transparent;
  border-top: 3px solid #666;
}
.dt-bar { flex: 1; }
.dt-bar .thumb { width: 10px; height: 72px; margin-top: 4px; }
.chk { height: 27px; flex: none; display: flex; align-items: center; gap: 6px; }
.chk-box {
  width: 14px;
  height: 14px;
  box-sizing: border-box;
  background: #fff;
  border: 1px solid #999;
  border-radius: 2px;
}
.btns { display: flex; gap: 6px; width: 753px; margin-top: 4px; }
.spring { flex: 1; }
.btn {
  width: 80px;
  height: 28px;
  padding: 0;
  box-sizing: border-box;
  background: #fff;
  border: 1px solid #c8c8c8;
  border-radius: 2px;
  color: #222;
  font: 12px/14px "Noto Sans CJK SC", sans-serif;
}
.btn.primary { background: #4598fe; border-color: #4598fe; color: #fff; }
.grip { position: absolute; right: 2px; bottom: 2px; width: 12px; height: 12px; }

.marks {
  position: absolute;
  left: 0;
  top: 0;
  width: 1307px;
  height: 851px;
  pointer-events: none;
}
</style>

<style>
html, body { margin: 0; overflow: hidden; }
</style>
